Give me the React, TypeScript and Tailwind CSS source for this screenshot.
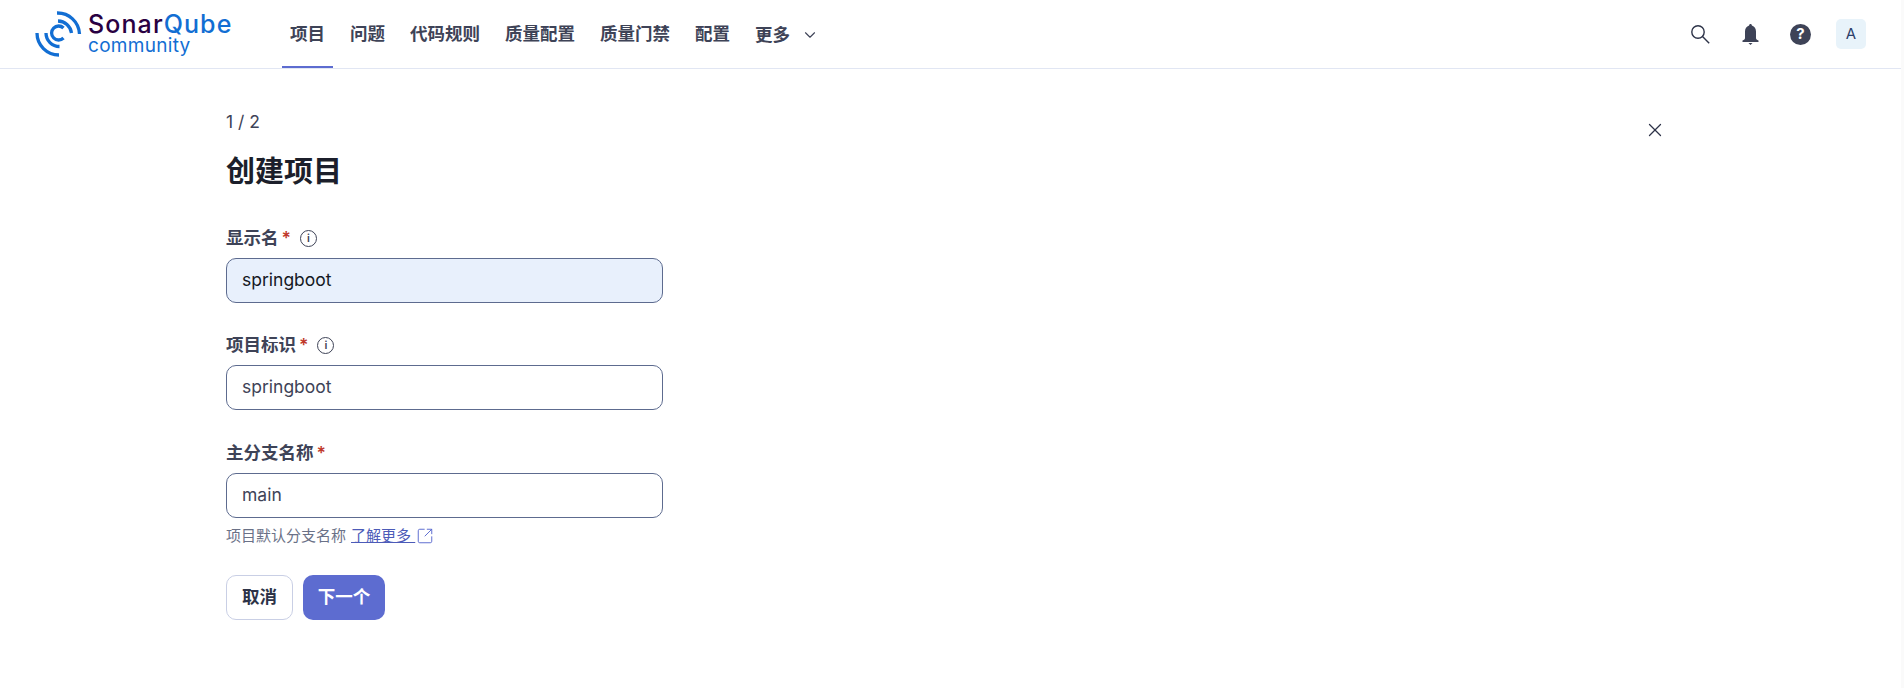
import { ChevronDown, SquareArrowOutUpRight, X } from 'lucide-react';

const navItems = ['项目', '问题', '代码规则', '质量配置', '质量门禁', '配置'];

function Logo() {
  return (
    <div className="flex w-[198px] shrink-0 items-center">
      <svg width="48" height="48" viewBox="0 0 48 48" fill="none" className="shrink-0">
        <g stroke="#126ed3" strokeWidth="3.3" fill="none">
          <path d="M23 3A22 22 0 0 1 45.5 24" />
          <path d="M24 11A14 14 0 0 1 37.5 23" />
          <path d="M29.5 18A7 7 0 1 0 29.5 28" />
          <path d="M12 23A13.5 13.5 0 0 0 25.5 36.5" />
          <path d="M3 23A22 22 0 0 0 25 45" />
        </g>
      </svg>
      <div className="ml-[6px] flex flex-col pb-[2px] font-['Inter',sans-serif]">
        <div className="text-[25px] leading-[26px] font-medium tracking-[1.1px] whitespace-nowrap">
          <span className="text-[#290042]">Sonar</span>
          <span className="text-[#126ed3]">Qube</span>
        </div>
        <div className="text-[19px] leading-[18px] tracking-[0.3px] text-[#126ed3]">community</div>
      </div>
    </div>
  );
}

function Header() {
  return (
    <header className="flex h-[69px] items-center justify-between border-b border-[#e1e6f3] pl-[34px] pr-[35px]">
      <div className="flex h-full items-center">
        <Logo />
        <nav className="ml-[50px] flex h-full items-center">
          {navItems.map((item, i) => (
            <a
              key={item}
              className={
                i === 0
                  ? 'flex h-full items-center border-b-2 border-[#5d6cd0] px-2 pt-[2px] text-[17.5px] font-semibold text-[#3e4357]'
                  : 'ml-[9px] flex h-full items-center border-b-2 border-transparent px-2 pt-[2px] text-[17.5px] font-semibold text-[#3e4357]'
              }
            >
              {item}
            </a>
          ))}
          <a className="ml-[9px] flex h-full items-center gap-[11px] px-2 pt-[2px] text-[17.5px] font-semibold text-[#3e4357]">
            更多
            <ChevronDown size={18} strokeWidth={1.5} />
          </a>
        </nav>
      </div>
      <div className="flex items-center">
        <svg width="19" height="19" viewBox="0 0 19 19" fill="none" stroke="#2d3348" strokeWidth="1.4">
          <circle cx="7" cy="7" r="6.2" />
          <path d="M11.5 11.5L18.2 18.2" />
        </svg>
        <svg width="17" height="21" viewBox="0 0 17 21" fill="#3e4357" className="ml-[32px]">
          <path d="M8.5 0C9.3 0 9.8.6 9.9 1.4C12.6 2.2 14 4.6 14 7.5V14C14 15 14.8 16.2 16.5 16.5V18H.5V16.5C2.2 16.2 3 15 3 14V7.5C3 4.6 4.4 2.2 7.1 1.4C7.2.6 7.7 0 8.5 0Z" />
          <path d="M6.5 19H10.5L8.5 21Z" />
        </svg>
        <div className="ml-[31px] flex h-[21px] w-[21px] items-center justify-center rounded-full bg-[#3e4357] text-[15px] font-bold text-white">
          ?
        </div>
        <div className="ml-[25px] flex h-[30px] w-[30px] items-center justify-center rounded-[5px] bg-[#e8f3fa] text-[15px] text-[#2d3f6b]">
          A
        </div>
      </div>
    </header>
  );
}

function Info() {
  return (
    <span className="ml-[9px] flex h-[17px] w-[17px] items-center justify-center rounded-full border border-[#3e4357] text-[11px] leading-none text-[#3e4357]">
      i
    </span>
  );
}

function Field({
  label,
  value,
  info,
  filled,
}: {
  label: string;
  value: string;
  info?: boolean;
  filled?: boolean;
}) {
  return (
    <div>
      <div className="flex h-[22px] items-center text-[17.5px] font-semibold text-[#3e4357]">
        {label}
        <span className="ml-[3px] text-[#c0392b]">*</span>
        {info && <Info />}
      </div>
      <div
        className={
          filled
            ? 'mt-[9px] flex h-[45px] w-[437px] items-center rounded-[10px] border border-[#5d6b8f] bg-[#e8f0fc] px-[15px] text-[17.5px] text-[#15181f]'
            : 'mt-[9px] flex h-[45px] w-[437px] items-center rounded-[10px] border border-[#5d6b8f] bg-white px-[15px] text-[17.5px] text-[#3e4357]'
        }
      >
        {value}
      </div>
    </div>
  );
}

export default function App() {
  return (
    <div className="h-[688px] w-[1904px] border-r-[3px] border-[#fafafa] bg-white font-['Inter','Noto_Sans_CJK_SC',sans-serif]">
      <Header />
      <main className="flex w-[1666px] justify-between pl-[226px] pt-[42px]">
        <div>
          <div className="text-[17.5px] leading-[22px] text-[#3e4357]">1 / 2</div>
          <h1 className="mt-[19px] text-[29px] leading-[40px] font-bold text-[#1c1f2b]">创建项目</h1>
          <div className="mt-[35px] flex flex-col gap-[31px]">
            <Field label="显示名" value="springboot" info filled />
            <Field label="项目标识" value="springboot" info />
            <div className="mt-[1px]">
              <Field label="主分支名称" value="main" />
              <div className="mt-[8px] flex items-center text-[15px] leading-[20px] text-[#6a7187]">
                项目默认分支名称
                <a className="ml-[5px] whitespace-pre text-[#4c5bb8] underline">了解更多 </a>
                <SquareArrowOutUpRight size={18} strokeWidth={1.3} className="ml-[1px] text-[#5d6cd0]" />
              </div>
            </div>
          </div>
          <div className="mt-[29px] flex gap-[10px]">
            <button className="h-[45px] w-[67px] rounded-[10px] border border-[#c9cfe5] bg-white text-[17.5px] font-semibold text-[#2d3348]">
              取消
            </button>
            <button className="h-[45px] w-[82px] rounded-[10px] bg-[#5d6cd0] text-[17.5px] font-semibold text-white">
              下一个
            </button>
          </div>
        </div>
        <X size={22} strokeWidth={1.4} className="mt-[8px] text-[#2d3348]" />
      </main>
    </div>
  );
}
